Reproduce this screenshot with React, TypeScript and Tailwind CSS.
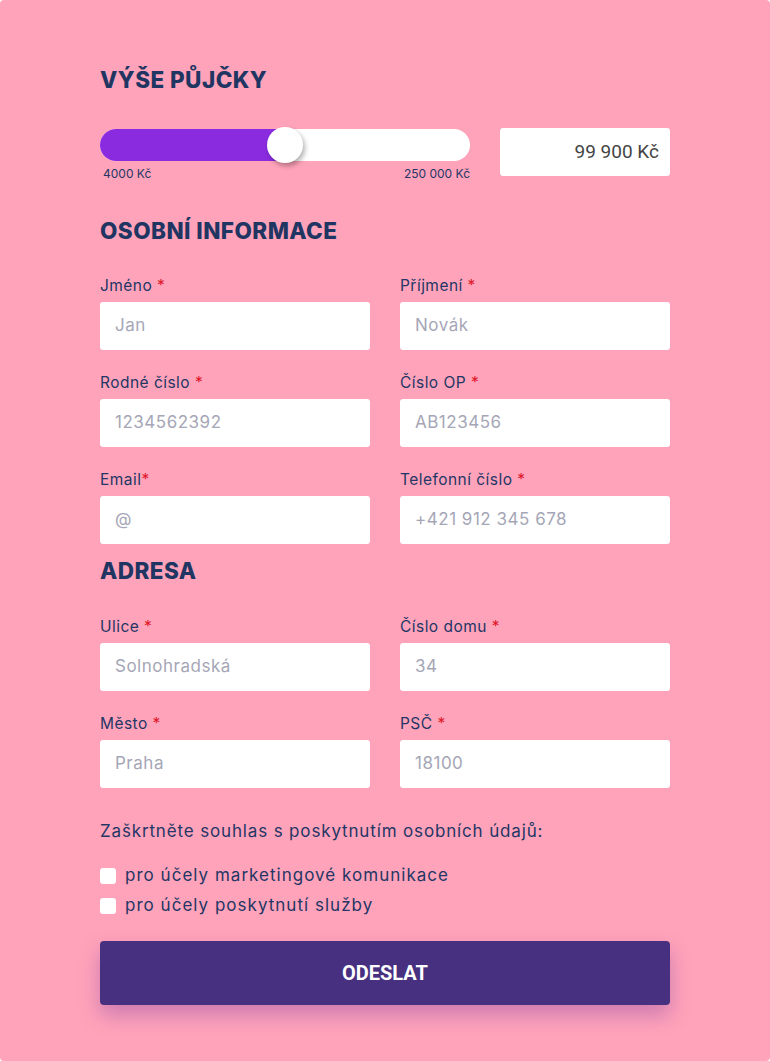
import React from "react";

const font = { fontFamily: "Inter, 'Noto Sans', sans-serif" };

function Field({ label, placeholder, tight }: { label: string; placeholder: string; tight?: boolean }) {
  return (
    <div className="flex flex-col">
      <label className="text-[15.5px] leading-[23px] tracking-[0.03em] text-[#243665] mb-[5px]">
        {label}
        {tight ? "" : " "}
        <span className="text-[#e0162b]">*</span>
      </label>
      <div className="h-[48px] bg-white rounded-[3px] flex items-center px-[15px] text-[17px] tracking-[0.03em] text-[#a5a6b6]">
        {placeholder}
      </div>
    </div>
  );
}

export default function App() {
  return (
    <div className="w-[770px] h-[1061px] bg-white">
      <div className="w-[770px] h-[1061px] bg-[#ffa3ba] rounded-[4px] px-[100px] pt-[63px]" style={font}>
        <h2 className="text-[22.5px] leading-[33px] tracking-[0.02em] font-extrabold text-[#1f3562]">VÝŠE PŮJČKY</h2>
        <div className="flex gap-[30px] mt-[32px]">
          <div className="w-[370px]">
            <div className="relative h-[32px] mt-[1px] rounded-full bg-white">
              <div className="absolute left-0 top-0 h-[32px] w-[190px] rounded-l-full bg-[#8a2be0]" />
              <div className="absolute left-[167px] top-[-2px] w-[36px] h-[36px] rounded-full bg-white shadow-[2px_3px_5px_rgba(0,0,0,0.3)]" />
            </div>
            <div className="flex justify-between mt-[6px] pl-[3px] text-[12px] leading-[14px] text-[#243665]">
              <span>4000 Kč</span>
              <span>250 000 Kč</span>
            </div>
          </div>
          <div
            className="w-[170px] h-[48px] bg-white rounded-[3px] flex items-center justify-end pr-[11px] text-[19px] text-[#454545]"
            style={{ fontFamily: "Roboto, sans-serif" }}
          >
            99 900 Kč
          </div>
        </div>

        <h2 className="mt-[33px] text-[22.5px] leading-[33px] tracking-[0.02em] font-extrabold text-[#1f3562]">OSOBNÍ INFORMACE</h2>
        <div className="grid grid-cols-2 gap-x-[30px] gap-y-[21px] mt-[27px]">
          <Field label="Jméno" placeholder="Jan" />
          <Field label="Příjmení" placeholder="Novák" />
          <Field label="Rodné číslo" placeholder="1234562392" />
          <Field label="Číslo OP" placeholder="AB123456" />
          <Field label="Email" placeholder="@" tight />
          <Field label="Telefonní číslo" placeholder="+421 912 345 678" />
        </div>

        <h2 className="mt-[10px] text-[22.5px] leading-[33px] tracking-[0.02em] font-extrabold text-[#1f3562]">ADRESA</h2>
        <div className="grid grid-cols-2 gap-x-[30px] gap-y-[21px] mt-[28px]">
          <Field label="Ulice" placeholder="Solnohradská" />
          <Field label="Číslo domu" placeholder="34" />
          <Field label="Město" placeholder="Praha" />
          <Field label="PSČ" placeholder="18100" />
        </div>

        <p className="mt-[30px] text-[17px] leading-[26px] tracking-[0.05em] text-[#243665]">
          Zaškrtněte souhlas s poskytnutím osobních údajů:
        </p>
        <div className="mt-[17px] flex flex-col">
          <label className="flex items-center gap-[9px] h-[30px] text-[17px] tracking-[0.06em] text-[#243665]">
            <span className="w-[16px] h-[16px] bg-white rounded-[3px]" />
            pro účely marketingové komunikace
          </label>
          <label className="flex items-center gap-[9px] h-[30px] text-[17px] tracking-[0.06em] text-[#243665]">
            <span className="w-[16px] h-[16px] bg-white rounded-[3px]" />
            pro účely poskytnutí služby
          </label>
        </div>

        <button
          className="mt-[20px] w-full h-[64px] rounded-[4px] bg-[#46307f] text-white text-[20px] font-bold shadow-[0_10px_20px_rgba(110,50,160,0.35)]"
          style={{ fontFamily: "Roboto, sans-serif" }}
        >
          ODESLAT
        </button>
      </div>
    </div>
  );
}
